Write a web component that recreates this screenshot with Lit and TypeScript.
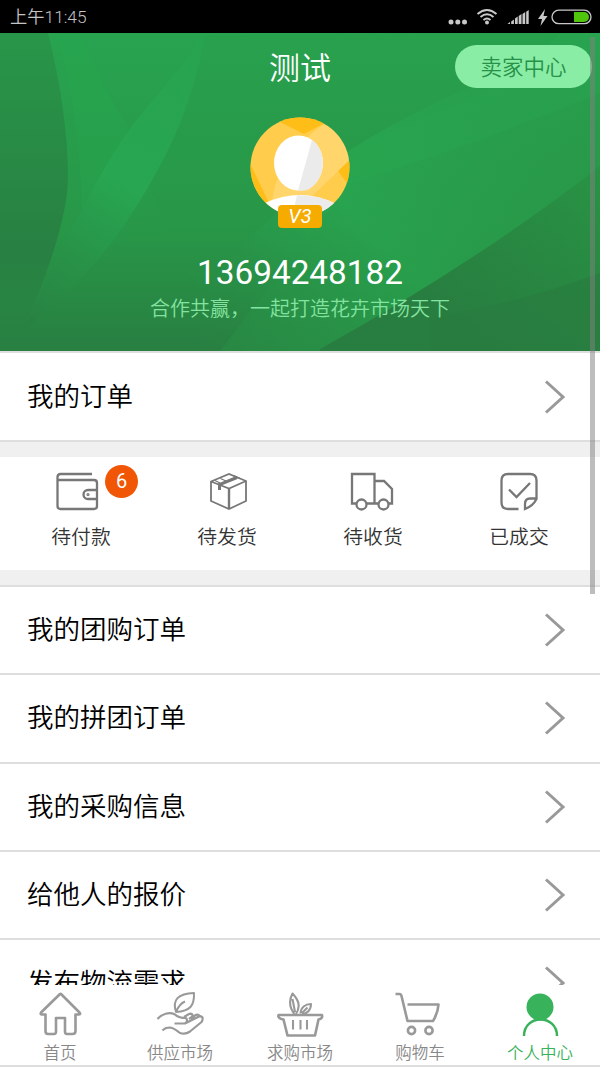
import { LitElement, html, svg, css } from "lit";
import { customElement } from "lit/decorators.js";

const chevron = svg`<path d="M2 1.5 19 17 2 32.5" fill="none" stroke="#999" stroke-width="3"/>`;

const orderTabs = [
  {
    label: "待付款",
    badge: "6",
    icon: svg`<g transform="translate(-3.5 0)"><path d="M36.5 2H5Q2 2 2 5V34Q2 37 5 37H38.500Q41.500 37 41.500 34V11Q41.500 8 38.500 8H2"/><path d="M41.500 18H32.500A4.500 4.500 0 0 0 32.500 27H41.500"/><circle cx="32.500" cy="22.500" r="1" stroke-width="1.200"/></g>`,
  },
  {
    label: "待发货",
    badge: "",
    icon: svg`<g transform="translate(2 0)"><path d="M4 9.500 22 2 39 9V29L22 37 4 29ZM4 9.500 22 16.500 39 9" stroke-width="1.800"/><path d="M22 16.500V37" stroke-width="2.400"/><path d="M12.500 18V12.500L30 5.500" stroke-width="3"/><path d="M8 8.500 13 11M13.500 6.500 19 9M26.500 3.500 33 6.500" stroke-width="1.200"/></g>`,
  },
  {
    label: "待收货",
    badge: "",
    icon: svg`<g transform="translate(-1 0)"><path d="M6 31.500H2V2H24.500V31.500H16M24.500 9H34L42 17V31.500H38.500M24.500 31.500H28"/><circle cx="11.500" cy="32.500" r="5"/><circle cx="33.500" cy="32.500" r="5"/></g>`,
  },
  {
    label: "已成交",
    badge: "",
    icon: svg`<path d="M21.500 37H11Q4.500 37 4.500 30.500V8.500Q4.500 2 11 2H33Q39.500 2 39.500 8.500V27Q36 34 28 37V32Q28 26.500 33 26.500H39.500M12 17.500 19.500 25 33 11"/>`,
  },
];

const navItems = [
  {
    label: "首页",
    active: false,
    icon: svg`<path d="M24 2 5 20.500Q4 22.500 6 22.500H9.500V39Q9.500 42 12 42H18Q20 42 20 39.500V26H29V39.500Q29 42 31 42H36.500Q39.500 42 39.500 39V22.500H43Q45 22.500 43.500 20.500L25.500 2.500Q24.700 1.500 24 2Z"/>`,
  },
  {
    label: "供应市场",
    active: false,
    icon: svg`<path d="M20 20C16 8 22 1.500 38 1C38.500 14 34 19 20 20ZM20 20C22 15 24 11.500 29 9.500" stroke-width="2"/><path d="M1.500 27C6 22 13 19.500 19 22.500Q22 26 30 26Q32.500 29 29 31.500H18.500M30 31 41 25.500Q44.500 23 46.500 25.500Q47 28 45.500 30L34 39.500Q29 43 24 41Q18 36 14 35.500Q9 35.500 6.500 38.500M35 27.500 39 23.500Q42 21.500 43.500 24M28 25 33 22Q36 21 37 24L33 27" stroke-width="2.200"/>`,
  },
  {
    label: "求购市场",
    active: false,
    icon: svg`<path d="M2.500 23H46Q47 26.500 42.500 27.500L39 43.500H11.500L7.500 27.500Q1.500 26.500 2.500 23Z"/><path d="M17 28V37.500M24.500 28V37.500M31 28V37.500M18.500 22C13 15 12.500 9 16.500 1.500C22.500 8 25 14 20 22M16.500 7 19 20M24.500 21.500C25 15.500 29 12 35 12C35 18 31 22 26 22M26 21 31.500 15.500" stroke-width="2.100"/>`,
  },
  {
    label: "购物车",
    active: false,
    icon: svg`<path d="M-.5 2H3.500Q5 2 5.500 4L11.500 29H37Q42 21 42.500 12.500H11.500"/><circle cx="15.500" cy="38.500" r="3.600"/><circle cx="33" cy="38.500" r="3.600"/>`,
  },
  {
    label: "个人中心",
    active: true,
    icon: svg`<circle cx="24" cy="15" r="13.500" fill="currentColor" stroke="none"/><path d="M8 44C8 22 41 22 41 44" stroke-width="2.500"/>`,
  },
];

const rows = ["我的团购订单", "我的拼团订单", "我的采购信息", "给他人的报价", "发布物流需求"];

@customElement("app-root")
export class AppRoot extends LitElement {
  static styles = css`
    :host {
      display: flex;
      flex-direction: column;
      position: relative;
      width: 600px;
      height: 1067px;
      overflow: hidden;
      background: #fff;
      color: #000;
      font-family: Roboto, "Noto Sans CJK SC", sans-serif;
      font-weight: 350;
      box-sizing: border-box;
    }
    * { box-sizing: border-box; }
    svg { display: block; overflow: visible; }
    .status {
      flex: none;
      height: 33px;
      background: #000;
      color: #c4c4c4;
      display: flex;
      align-items: center;
      justify-content: space-between;
      padding: 2px 8px 0 10px;
      font-size: 17.3px;
      line-height: 31px;
    }
    .page { flex: 1; min-height: 0; overflow: hidden; }
    .hero {
      position: relative;
      height: 318px;
      display: flex;
      flex-direction: column;
      align-items: center;
      color: #fff;
    }
    .backdrop { position: absolute; inset: 0; overflow: hidden; }
    .title {
      position: relative;
      padding-top: 14px;
      height: 56px;
      line-height: 44px;
      font-size: 31px;
    }
    .seller {
      position: absolute;
      right: 8px;
      top: 12px;
      width: 137px;
      height: 43px;
      border-radius: 22px;
      background: #89eda6;
      color: #289148;
      font-size: 21.5px;
      line-height: 45px;
      text-align: center;
    }
    .avatar { position: relative; margin-top: 28px; height: 100px; }
    .level {
      position: absolute;
      left: 28px;
      top: 88px;
      width: 44px;
      height: 23px;
      border-radius: 4px;
      background: #f5ab00;
      font: italic 400 20px/23px Roboto, sans-serif;
      text-align: center;
    }
    .phone {
      position: relative;
      margin-top: 35px;
      height: 40px;
      line-height: 41px;
      font-size: 33.3px;
      font-weight: 400;
    }
    .slogan {
      position: relative;
      height: 30px;
      line-height: 32px;
      font-size: 20px;
      color: #84e3a0;
      font-family: "Noto Sans CJK SC", sans-serif;
    }
    .row {
      display: flex;
      align-items: center;
      justify-content: space-between;
      height: 88.3px;
      border-top: 2px solid #dedede;
      padding: 0 34px 0 27px;
      font-size: 26.5px;
      line-height: 40px;
    }
    .orders { height: 91px; border-bottom: 2px solid #dedede; }
    .gap { height: 15px; background: #f0f0f0; }
    .tabs { display: flex; height: 113px; padding: 0 8px; }
    .tab {
      flex: 1;
      display: flex;
      flex-direction: column;
      align-items: center;
      padding-top: 15px;
      font-size: 19.8px;
      line-height: 30px;
      color: #333;
    }
    .glyph { position: relative; margin-bottom: 11px; color: #777; }
    .badge {
      position: absolute;
      left: 46px;
      top: -7px;
      width: 33px;
      height: 33px;
      border-radius: 50%;
      background: #f05606;
      color: #fff;
      font-size: 20px;
      font-weight: 400;
      line-height: 33px;
      text-align: center;
    }
    .nav {
      flex: none;
      display: flex;
      height: 82px;
      border-bottom: 2px solid #dedede;
      background: #fff;
    }
    .item {
      flex: 1;
      display: flex;
      flex-direction: column;
      align-items: center;
      padding-top: 7px;
      gap: 5px;
      font-size: 16.5px;
      line-height: 24px;
      color: #888;
    }
    .item svg { color: #999; }
    .item.active, .item.active svg { color: #38b35c; }
    .scrollbar {
      position: absolute;
      left: 590px;
      top: 37px;
      width: 5px;
      height: 557px;
      background: rgba(128, 128, 128, 0.52);
    }
  `;

  private backdrop() {
    return svg`
      <defs>
        <linearGradient id="base" x1="0" y1="0" x2="0" y2="1">
          <stop offset="0" stop-color="#28a34f"/>
          <stop offset=".6" stop-color="#289848"/>
          <stop offset="1" stop-color="#287f41"/>
        </linearGradient>
        <linearGradient id="side" x1="0" y1="0" x2="0" y2="1">
          <stop offset="0" stop-color="#289649"/>
          <stop offset=".7" stop-color="#288042"/>
          <stop offset="1" stop-color="#288041" stop-opacity="0"/>
        </linearGradient>
        <linearGradient id="leaf" gradientUnits="userSpaceOnUse" x1="200" y1="0" x2="30" y2="290">
          <stop offset="0" stop-color="#28a350"/>
          <stop offset=".5" stop-color="#28a651"/>
          <stop offset=".75" stop-color="#289448"/>
          <stop offset="1" stop-color="#288242"/>
        </linearGradient>
        <linearGradient id="beam" gradientUnits="userSpaceOnUse" x1="470" y1="20" x2="190" y2="300">
          <stop offset="0" stop-color="#28a650" stop-opacity=".2"/>
          <stop offset=".5" stop-color="#28a650"/>
          <stop offset="1" stop-color="#288543" stop-opacity="0"/>
        </linearGradient>
        <linearGradient id="dim" gradientUnits="userSpaceOnUse" x1="330" y1="100" x2="440" y2="270">
          <stop offset="0" stop-color="#289748" stop-opacity="0"/>
          <stop offset="1" stop-color="#289547"/>
        </linearGradient>
        <linearGradient id="shade" gradientUnits="userSpaceOnUse" x1="600" y1="140" x2="480" y2="300">
          <stop offset="0" stop-color="#289344"/>
          <stop offset="1" stop-color="#287e40"/>
        </linearGradient>
      </defs>
      <rect width="600" height="318" fill="url(#base)"/>
      <path d="M0 0H48Q68 80 68 147Q66 200 22 300L10 318H0Z" fill="url(#side)"/>
      <path d="M80 0Q100 50 128 95L100 147L82 180Q80 80 56 0Z" fill="#28a851" opacity=".3"/>
      <path d="M205 2Q190 62 150 155L185 237 200 257Q260 195 350 117L510 47 560 0Z" fill="#28924a" opacity=".14"/>
      <path d="M205 2C176 42 140 80 120 110C95 150 80 180 62 215L22 300C60 265 90 240 115 205C165 135 192 75 205 2Z" fill="url(#leaf)"/>
      <path d="M560 20Q430 65 350 117Q250 195 155 308L160 318H320Q480 240 600 133V10Z" fill="url(#beam)"/>
      <path d="M350 150Q480 110 600 60V133Q480 240 320 318H220Z" fill="url(#dim)" opacity=".6"/>
      <path d="M600 133Q480 227 320 316V318H600Z" fill="url(#shade)"/>
      <path d="M600 240Q520 270 430 285V318H600Z" fill="#287c40" opacity=".6"/>`;
  }

  render() {
    return html`
      <header class="status">
        <span>上午11:45</span>
        <svg width="146" height="24" viewBox="0 0 146 24" fill="none" stroke="#c8c8c8">
          <g fill="#c8c8c8" stroke="none">
            <circle cx="5" cy="16" r="2.500"/><circle cx="11.800" cy="16" r="2.500"/><circle cx="18.500" cy="16" r="2.500"/>
            <circle cx="41" cy="16.500" r="2"/>
            <path d="M61.500 18h2.500v-2L61.500 18ZM65.200 18h2.700v-4.500l-2.700 2ZM69 18h2.700v-7.500l-2.700 2ZM72.700 18h2.800v-10l-2.800 2ZM76.500 18h2.700V6l-2.700 2ZM80.200 18h2.500V4l-2.500 1.800Z"/>
            <path d="M99 3 92 13h4l-1.500 7 7-10h-4Z"/>
          </g>
          <path d="M31.500 8Q41 0 50.500 8M34.500 11Q41 5.500 47.500 11M37.500 14Q41 11 44.500 14" stroke-width="2"/>
          <rect x="106" y="4.200" width="39" height="13.500" rx="6.750" stroke-width="1.300"/>
          <path d="M128 6h10a5 5 0 0 1 0 10h-10Z" fill="#4fc50c" stroke="none"/>
        </svg>
      </header>
      <main class="page">
        <section class="hero">
          <svg class="backdrop" width="600" height="318" viewBox="0 0 600 318">${this.backdrop()}</svg>
          <div class="title">测试</div>
          <div class="seller">卖家中心</div>
          <div class="avatar">
            <svg width="100" height="100" viewBox="0 0 100 100">
              <defs><clipPath id="disc"><circle cx="50" cy="50" r="49.500"/></clipPath></defs>
              <g clip-path="url(#disc)">
                <rect width="100" height="100" fill="#ffcc4c"/>
                <path d="M28 4 54 17 75 6V0H28ZM0 46 20 88H0ZM100 42 88 54 97 66H100Z" fill="#ffbd18"/>
                <path d="M76 6C45 25 25 57 22 84L60 81 100 43V0Z" fill="#fff" opacity=".18"/>
                <ellipse cx="48.500" cy="46" rx="24.500" ry="27.500" fill="#fff"/>
                <path d="M62 23C77 33 76 60 62 70Q56 75 48 73.500Z" fill="#ecebeb"/>
                <path d="M15 86Q50 70 84 86V100H15Z" fill="#fff"/>
                <path d="M47 78.200Q70 78.500 84 86V100H42Z" fill="#ecebeb"/>
              </g>
            </svg>
            <span class="level">V3</span>
          </div>
          <div class="phone">13694248182</div>
          <div class="slogan">合作共赢，一起打造花卉市场天下</div>
        </section>
        <div class="row orders"><span>我的订单</span><svg width="22" height="34">${chevron}</svg></div>
        <div class="gap"></div>
        <section class="tabs">
          ${orderTabs.map(
            (t) => html`<div class="tab">
              <div class="glyph">
                <svg width="44" height="40" viewBox="0 0 44 40" fill="none" stroke="currentColor" stroke-width="2.300">${t.icon}</svg>
                ${t.badge ? html`<span class="badge">${t.badge}</span>` : ""}
              </div>
              ${t.label}
            </div>`
          )}
        </section>
        <div class="gap"></div>
        ${rows.map((r) => html`<div class="row"><span>${r}</span><svg width="22" height="34">${chevron}</svg></div>`)}
      </main>
      <nav class="nav">
        ${navItems.map(
          (n) => html`<div class="item ${n.active ? "active" : ""}">
            <svg width="48" height="45" viewBox="0 0 48 45" fill="none" stroke="currentColor" stroke-width="2.600" stroke-linejoin="round">${n.icon}</svg>
            ${n.label}
          </div>`
        )}
      </nav>
      <div class="scrollbar"></div>
    `;
  }
}
